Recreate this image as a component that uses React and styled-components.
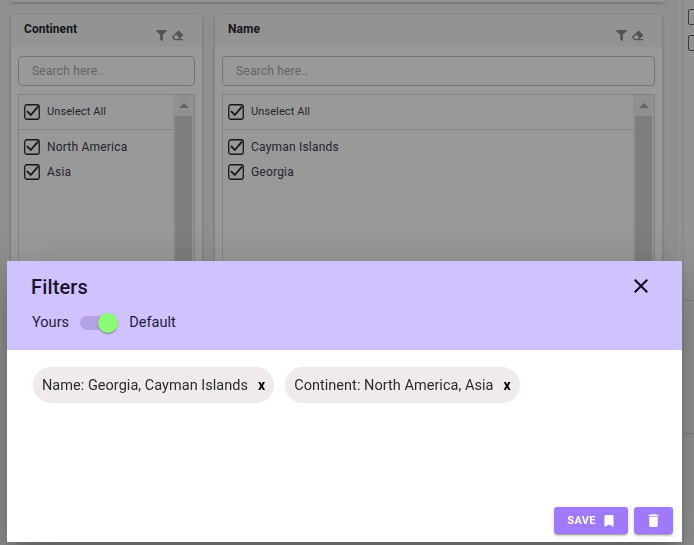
import React from "react";
import styled, { createGlobalStyle } from "styled-components";
import { FaFilter, FaEraser, FaBookmark } from "react-icons/fa";
import { MdClose, MdDelete } from "react-icons/md";

const GlobalStyle = createGlobalStyle`
  html, body {
    margin: 0;
    padding: 0;
    height: 545px;
    overflow: hidden;
    background: #eeeeee;
    font-family: Roboto, "Liberation Sans", sans-serif;
  }
`;

const Page = styled("div")({
  display: "flex",
  height: "545px",
  overflow: "hidden",
  boxSizing: "border-box",
});

const Main = styled("div")({
  width: "664px",
  flexShrink: 0,
  paddingLeft: "11px",
  boxSizing: "border-box",
  display: "flex",
  flexDirection: "column",
});

const TopStrip = styled("div")({
  height: "2px",
  background: "#f5f5f5",
  boxShadow: "0 1px 3px rgba(0,0,0,0.3)",
  marginBottom: "13px",
});

const Columns = styled("div")({
  display: "flex",
  gap: "13px",
  flex: 1,
});

const Card = styled("section")`
  width: ${(props) => props.$width}px;
  height: 400px;
  flex-shrink: 0;
  background: #ffffff;
  border-radius: 3px;
  box-shadow: 0 1px 3px rgba(0, 0, 0, 0.28);
`;

const CardHead = styled("header")({
  height: "32px",
  background: "#f5f5f5",
  display: "flex",
  justifyContent: "space-between",
  padding: "0 19.5px 0 13px",
  boxSizing: "border-box",
});

const CardTitle = styled("h3")({
  margin: "7px 0 0",
  fontSize: "12px",
  lineHeight: "14px",
  fontWeight: 700,
  letterSpacing: "0.05px",
  color: "#26262c",
});

const HeadIcons = styled("div")({
  display: "flex",
  alignItems: "center",
  gap: "5px",
  height: "12px",
  marginTop: "14px",
  color: "#8c8c8c",
  fontSize: "11px",
});

const CardBody = styled("div")({
  padding: "9px 7px 0",
});

const SearchBox = styled("div")({
  height: "30px",
  border: "1px solid #c4c4c4",
  borderRadius: "4px",
  boxSizing: "border-box",
  padding: "0 13px",
  display: "flex",
  alignItems: "center",
  fontSize: "12px",
  color: "#a8a8a8",
  letterSpacing: "0.2px",
});

const ListBox = styled("div")({
  marginTop: "8px",
  height: "300px",
  border: "1px solid #dddddd",
  boxSizing: "border-box",
  display: "flex",
});

const List = styled("div")({
  flex: 1,
  minWidth: 0,
});

const AllRow = styled("div")({
  height: "34px",
  borderBottom: "1px solid #dddddd",
  display: "flex",
  alignItems: "center",
  padding: "0 5px",
  gap: "7px",
  fontSize: "11px",
  letterSpacing: "0.1px",
  color: "#3d3d4e",
});

const Items = styled("div")({
  paddingTop: "5px",
});

const ItemRow = styled("div")({
  height: "25px",
  display: "flex",
  alignItems: "center",
  padding: "0 5px",
  gap: "7px",
  fontSize: "12px",
  letterSpacing: "0.2px",
  color: "#3d3d4e",
});

const Label = styled("span")({
  marginTop: "-2px",
});

const Scrollbar = styled("div")({
  width: "21px",
  flexShrink: 0,
  background: "#f1f1f1",
  padding: "0 2px",
  boxSizing: "border-box",
  display: "flex",
  flexDirection: "column",
});

const ScrollArrow = styled("div")({
  height: "21px",
  flexShrink: 0,
  display: "flex",
  alignItems: "center",
  justifyContent: "center",
  "&::before": {
    content: '""',
    borderLeft: "5px solid transparent",
    borderRight: "5px solid transparent",
    borderBottom: "5px solid #a8a8a8",
  },
});

const ScrollThumb = styled("div")({
  flex: 1,
  background: "#d2d2d2",
});

const Aside = styled("aside")({
  flex: 1,
  marginLeft: "11px",
  display: "flex",
  minWidth: 0,
});

const Rail = styled("div")({
  width: "7px",
  flexShrink: 0,
  background: "#f3f3f3",
  borderLeft: "1px solid #e6e6e6",
  borderRight: "1px solid #e0e0e0",
});

const AsideBody = styled("div")({
  flex: 1,
  minWidth: 0,
  overflow: "hidden",
  background: "#f5f5f5",
  display: "flex",
  flexDirection: "column",
});

const AsideSection = styled("div")`
  height: ${(props) => props.$height}px;
  flex-shrink: 0;
  box-sizing: border-box;
  border-bottom: 1px solid #d8d8d8;
  padding: 9px 0 0 4px;
  display: flex;
  flex-direction: column;
  gap: 10px;
`;

const AsideBox = styled("div")({
  width: "16px",
  height: "16px",
  flexShrink: 0,
  border: "1px solid #666666",
  borderRadius: "2px",
  boxSizing: "border-box",
});

const Backdrop = styled("div")({
  position: "fixed",
  inset: 0,
  background: "rgba(0,0,0,0.4)",
});

const Modal = styled("div")({
  position: "fixed",
  left: "7px",
  top: "261px",
  width: "675px",
  height: "281px",
  background: "#ffffff",
  display: "flex",
  flexDirection: "column",
  boxShadow:
    "0 11px 15px -7px rgba(0,0,0,.2), 0 24px 38px 3px rgba(0,0,0,.14), 0 9px 46px 8px rgba(0,0,0,.12)",
});

const ModalHead = styled("div")({
  height: "89px",
  flexShrink: 0,
  background: "#cfc2ff",
  boxSizing: "border-box",
  padding: "14px 25px 0",
  display: "flex",
  justifyContent: "space-between",
  alignItems: "flex-start",
});

const ModalTitle = styled("h2")({
  margin: "0 0 0 -1px",
  fontSize: "20px",
  lineHeight: "24px",
  fontWeight: 500,
  letterSpacing: "0.15px",
  color: "#1b1230",
});

const ToggleRow = styled("div")({
  marginTop: "14px",
  display: "flex",
  alignItems: "center",
  fontSize: "14.5px",
  lineHeight: "20px",
  letterSpacing: "0.05px",
  color: "#1f1a3d",
});

const Track = styled("span")({
  display: "inline-block",
  position: "relative",
  width: "34px",
  height: "14px",
  borderRadius: "7px",
  background: "#b3a2e4",
  margin: "0 15px 0 11px",
});

const Knob = styled("span")({
  position: "absolute",
  right: "-4px",
  top: "-3px",
  width: "20px",
  height: "20px",
  borderRadius: "50%",
  background: "#8cfb75",
  boxShadow: "0 2px 1px -1px rgba(0,0,0,.2), 0 1px 1px rgba(0,0,0,.14), 0 1px 3px rgba(0,0,0,.12)",
});

const CloseButton = styled("button")({
  border: 0,
  padding: 0,
  background: "none",
  color: "#0c0820",
  fontSize: "24px",
  lineHeight: 0,
  marginTop: "-1px",
  marginRight: "4px",
});

const ModalBody = styled("div")({
  flex: 1,
  padding: "17px 26px 0",
  display: "flex",
  alignItems: "flex-start",
  gap: "11px",
});

const Chip = styled("div")({
  height: "36px",
  borderRadius: "18px",
  background: "#eeebea",
  display: "flex",
  alignItems: "center",
  padding: "0 9px",
  fontSize: "14.5px",
  letterSpacing: "0.03px",
  color: "#2b2b2b",
});

const ChipClose = styled("span")({
  marginLeft: "10px",
  fontWeight: 700,
  fontSize: "14px",
  color: "#000000",
});

const ModalFoot = styled("div")({
  height: "35px",
  flexShrink: 0,
  display: "flex",
  justifyContent: "flex-end",
  gap: "6px",
  padding: "0 9px",
  boxSizing: "border-box",
});

const ActionButton = styled("button")`
  width: ${(props) => props.$width}px;
  height: 27px;
  border: 0;
  border-radius: 3px;
  background: #a078fc;
  color: #ffffff;
  font-family: inherit;
  font-size: 11px;
  font-weight: 700;
  letter-spacing: 0.3px;
  display: flex;
  align-items: center;
  justify-content: center;
  gap: 7px;
  padding: 0;
  box-shadow: 0 3px 1px -2px rgba(0, 0, 0, 0.2), 0 2px 2px rgba(0, 0, 0, 0.14), 0 1px 5px rgba(0, 0, 0, 0.12);
`;

const Check = () => (
  <svg width="16" height="16" viewBox="0 0 16 16" style={{ flexShrink: 0, marginTop: "-1px" }}>
    <rect x="0.75" y="0.75" width="14.5" height="14.5" rx="2.2" fill="none" stroke="#26262e" strokeWidth="1.3" />
    <path d="M3 7.2 L6.8 11 L14 2.6" fill="none" stroke="#26262e" strokeWidth="1.8" />
  </svg>
);

const panels = [
  { title: "Continent", width: 191, items: ["North America", "Asia"] },
  { title: "Name", width: 447, items: ["Cayman Islands", "Georgia"] },
];

const chips = ["Name: Georgia, Cayman Islands", "Continent: North America, Asia"];

const FilterPanel = ({ title, width, items }) => (
  <Card $width={width}>
    <CardHead>
      <CardTitle>{title}</CardTitle>
      <HeadIcons>
        <FaFilter />
        <FaEraser />
      </HeadIcons>
    </CardHead>
    <CardBody>
      <SearchBox>Search here..</SearchBox>
      <ListBox>
        <List>
          <AllRow>
            <Check />
            <Label>Unselect All</Label>
          </AllRow>
          <Items>
            {items.map((item) => (
              <ItemRow key={item}>
                <Check />
                <Label>{item}</Label>
              </ItemRow>
            ))}
          </Items>
        </List>
        <Scrollbar>
          <ScrollArrow />
          <ScrollThumb />
        </Scrollbar>
      </ListBox>
    </CardBody>
  </Card>
);

export default function App() {
  return (
    <>
      <GlobalStyle />
      <Page>
        <Main>
          <TopStrip />
          <Columns>
            {panels.map((panel) => (
              <FilterPanel key={panel.title} {...panel} />
            ))}
          </Columns>
        </Main>
        <Aside>
          <Rail />
          <AsideBody>
            <AsideSection $height={301}>
              <AsideBox />
              <AsideBox />
            </AsideSection>
            <AsideSection $height={133} />
          </AsideBody>
        </Aside>
      </Page>
      <Backdrop />
      <Modal>
        <ModalHead>
          <div>
            <ModalTitle>Filters</ModalTitle>
            <ToggleRow>
              Yours
              <Track>
                <Knob />
              </Track>
              Default
            </ToggleRow>
          </div>
          <CloseButton>
            <MdClose />
          </CloseButton>
        </ModalHead>
        <ModalBody>
          {chips.map((chip) => (
            <Chip key={chip}>
              {chip}
              <ChipClose>x</ChipClose>
            </Chip>
          ))}
        </ModalBody>
        <ModalFoot>
          <ActionButton $width={74}>
            SAVE
            <FaBookmark size={12} />
          </ActionButton>
          <ActionButton $width={39}>
            <MdDelete size={17} />
          </ActionButton>
        </ModalFoot>
      </Modal>
    </>
  );
}
